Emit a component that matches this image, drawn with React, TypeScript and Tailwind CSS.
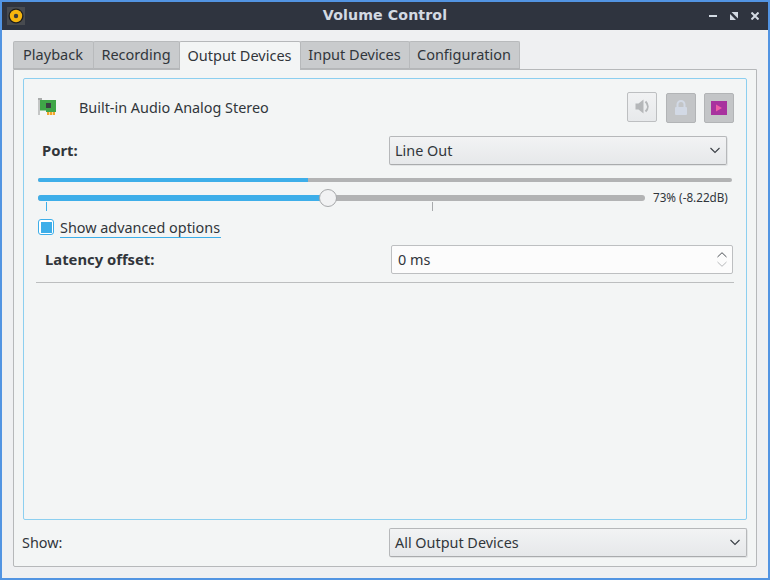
import React from 'react';

const Chevron: React.FC = () => (
  <svg width="10" height="7" viewBox="0 0 10 7" fill="none" stroke="#3a3f45" strokeWidth="1.1">
    <path d="M0.5 1 L5 5.5 L9.5 1" />
  </svg>
);

const Combo: React.FC<{ label: string; className: string }> = ({ label, className }) => (
  <div className={`flex items-center justify-between pl-[5px] pr-[6px] rounded-[2px] border border-[#b6b8ba] border-b-[#a9abad] bg-gradient-to-b from-[#f2f3f4] to-[#e6e8ea] shadow-[1px_1px_0_#e2e4e5] text-[#31363b] ${className}`}>
    <span>{label}</span>
    <Chevron />
  </div>
);

const tabs = ['Playback', 'Recording', 'Output Devices', 'Input Devices', 'Configuration'];
const tabWidths = ['w-[81px]', 'w-[87px]', 'w-[122px]', 'w-[110px]', 'w-[111px]'];

export default function App() {
  return (
    <div className="w-[770px] h-[580px] flex flex-col border-2 border-[#5294e2] bg-[#eff0f2] text-[14.4px] text-[#31363b] overflow-hidden font-['Noto_Sans',sans-serif]">
      {/* title bar */}
      <div className="h-[28px] shrink-0 bg-[#2f343f] flex items-center pl-[5px] pr-[9px]">
        <div className="w-[54px]">
          <div className="w-[18px] h-[18px] bg-[#484b50] flex items-center justify-center">
            <svg width="16" height="16" viewBox="0 0 16 16">
              <circle cx="8" cy="8" r="7.5" fill="#1f1f1f" />
              <circle cx="8" cy="8" r="6.2" fill="#f5b50e" />
              <circle cx="8" cy="8" r="2.2" fill="#3a3a3a" />
            </svg>
          </div>
        </div>
        <div className="flex-1 text-center text-[14.2px] font-bold text-[#d3dae3] font-['DejaVu_Sans',sans-serif] tracking-[0.1px]">Volume Control</div>
        <div className="w-[50px] flex items-center justify-end gap-[13px]">
          <svg width="8" height="8" viewBox="0 0 8 8" fill="#d3dae3">
            <rect x="0" y="3" width="8" height="2" />
          </svg>
          <svg width="8" height="8" viewBox="0 0 8 8" fill="#d3dae3">
            <path d="M1.5 0 H8 V6.5 Z" />
            <path d="M0 2 V8 H6 Z" />
          </svg>
          <svg width="8" height="8" viewBox="0 0 8 8" stroke="#d3dae3" strokeWidth="2">
            <path d="M0.5 0.5 L7.5 7.5 M7.5 0.5 L0.5 7.5" />
          </svg>
        </div>
      </div>

      {/* content */}
      <div className="flex-1 pt-[11px] px-[11px] pb-[12px] flex flex-col">
        <div className="flex h-[28px] shrink-0 relative z-10 text-[14.5px]">
          {tabs.map((t, i) =>
            i === 2 ? (
              <div key={t} className={`${tabWidths[i]} relative z-10 -mr-px h-[29px] pb-px pr-px flex items-center justify-center bg-[#f3f5f5] border border-b-0 border-[#b6b8ba] rounded-t-[2px]`}>
                {t}
              </div>
            ) : (
              <div key={t} className={`${tabWidths[i]} pr-px flex items-center justify-center bg-[#c9cbcd] border border-b-[#b4b6b8] border-[#b8babc] rounded-t-[2px] -mr-px last:mr-0`}>
                {t}
              </div>
            ),
          )}
        </div>
        <div className="flex-1 flex flex-col bg-[#f3f5f5] border border-[#b6b8ba] rounded-b-[2px] pt-[8px] px-[9px] pb-[9px]">
          <div className="h-[442px] shrink-0 border border-[#8ccff0] rounded-[2px] pl-[14px] pr-[13px] flex flex-col">
            {/* device header */}
            <div className="h-[30px] mt-[13px] shrink-0 flex items-center">
              <svg width="20" height="18" viewBox="0 0 20 18" className="shrink-0">
                <rect x="0" y="0" width="2" height="17" fill="#c4c6c6" />
                <rect x="0" y="0" width="4" height="2" fill="#a9acac" />
                <path d="M2 2 H18 V14 H8 V12.5 H2 Z" fill="#3fa648" />
                <rect x="8" y="5" width="5" height="5" fill="#3a4043" />
                <rect x="9" y="14" width="8" height="3" fill="#f0a52c" />
                <rect x="11" y="14" width="1" height="3" fill="#f8dca0" />
                <rect x="14" y="14" width="1" height="3" fill="#f8dca0" />
              </svg>
              <span className="ml-[21px] mt-[2px] flex-1">Built-in Audio Analog Stereo</span>
              <div className="flex items-start gap-[8px] mr-[-1px] h-[31px]">
                <div className="w-[30px] h-[30px] rounded-[2px] border border-[#bdbfc1] bg-gradient-to-b from-[#f1f2f3] to-[#e7e9eb] flex items-center justify-center">
                  <svg width="15" height="15" viewBox="0 0 15 15" fill="#b5b7b9">
                    <path d="M0.5 4.5 H3.5 L8.5 0.5 V14.5 L3.5 10.5 H0.5 Z" />
                    <path d="M10.5 2.5 C13.5 5.5 13.5 9.5 10.5 12.5" fill="none" stroke="#b5b7b9" strokeWidth="2" />
                  </svg>
                </div>
                <div className="ml-[1px] mt-[1px] w-[30px] h-[30px] rounded-[2px] border border-[#b2b4b6] bg-[#c3c5c7] flex items-center justify-center">
                  <svg width="14" height="15" viewBox="0 0 14 15">
                    <path d="M3.5 8 V4.5 A3.5 3.5 0 0 1 10.5 4.5 V8" fill="none" stroke="#d2d9e5" strokeWidth="2" />
                    <rect x="1" y="7" width="12" height="8" rx="1" fill="#d2d9e5" />
                  </svg>
                </div>
                <div className="mt-[1px] w-[30px] h-[30px] rounded-[2px] border border-[#b2b4b6] bg-[#c3c5c7] flex items-center justify-center">
                  <svg width="16" height="14" viewBox="0 0 16 14">
                    <rect width="16" height="14" fill="#a8329e" />
                    <path d="M5 3.5 L11 7 L5 10.5 Z" fill="#ee5fa7" />
                  </svg>
                </div>
              </div>
            </div>

            {/* port */}
            <div className="mt-[14px] h-[29px] shrink-0 flex items-center">
              <span className="ml-[4px] font-bold text-[14.8px] w-[347px]">Port:</span>
              <Combo label="Line Out" className="w-[338px] h-[29px]" />
            </div>

            {/* top level bar */}
            <div className="mt-[13px] h-[4px] w-[694px] shrink-0 rounded-full bg-[#b2b3b4] overflow-hidden">
              <div className="h-full w-[270px] bg-[#3daee9]" />
            </div>

            {/* volume slider */}
            <div className="mt-[6px] h-[27px] shrink-0 flex">
              <div className="w-[607px] relative">
                <div className="mt-[7px] h-[6px] rounded-full bg-[#b2b3b4] overflow-hidden">
                  <div className="h-full w-[290px] bg-[#3daee9]" />
                </div>
                <div className="absolute left-[281px] top-[1px] w-[18px] h-[18px] rounded-full bg-[#f1f2f3] border border-[#a6a8aa]" />
                <div className="absolute left-[8px] top-[14px] w-px h-[9px] bg-[#3daee9]" />
                <div className="absolute left-[394px] top-[14px] w-px h-[9px] bg-[#a8aaac]" />
              </div>
              <span className="ml-[8px] text-[11.7px] leading-[18px] whitespace-nowrap">73% (-8.22dB)</span>
            </div>

            {/* advanced checkbox */}
            <div className="mt-[2px] h-[20px] shrink-0 flex items-center">
              <div className="w-[16px] h-[16px] rounded-[3px] border border-[#3daee9] bg-white flex items-center justify-center">
                <div className="w-[11px] h-[11px] bg-[#3daee9]" />
              </div>
              <span className="ml-[6px] border-b border-[#3daee9] leading-[19px] pr-px mt-[1px]">Show advanced options</span>
            </div>

            {/* latency */}
            <div className="mt-[8px] h-[29px] shrink-0 flex items-center">
              <span className="ml-[7px] font-bold text-[14.8px] w-[346px]">Latency offset:</span>
              <div className="w-[342px] h-[29px] rounded-[2px] border border-[#bdbfc1] bg-[#fcfcfc] flex items-center justify-between pl-[6px] pr-[5px]">
                <span>0 ms</span>
                <svg width="10" height="15" viewBox="0 0 10 15" fill="none" strokeWidth="1">
                  <path d="M0.5 5 L5 0.7 L9.5 5" stroke="#4a4f54" />
                  <path d="M0.5 10 L5 14.3 L9.5 10" stroke="#b6b8ba" />
                </svg>
              </div>
            </div>

            <div className="mt-[8px] -mx-[2px] h-px w-[698px] shrink-0 bg-[#bcbebf]" />
          </div>

          {/* footer */}
          <div className="mt-[8px] h-[29px] shrink-0 flex items-center">
            <span className="w-[367px] -ml-[1px]">Show:</span>
            <Combo label="All Output Devices" className="w-[358px] h-[29px]" />
          </div>
        </div>
      </div>
    </div>
  );
}
